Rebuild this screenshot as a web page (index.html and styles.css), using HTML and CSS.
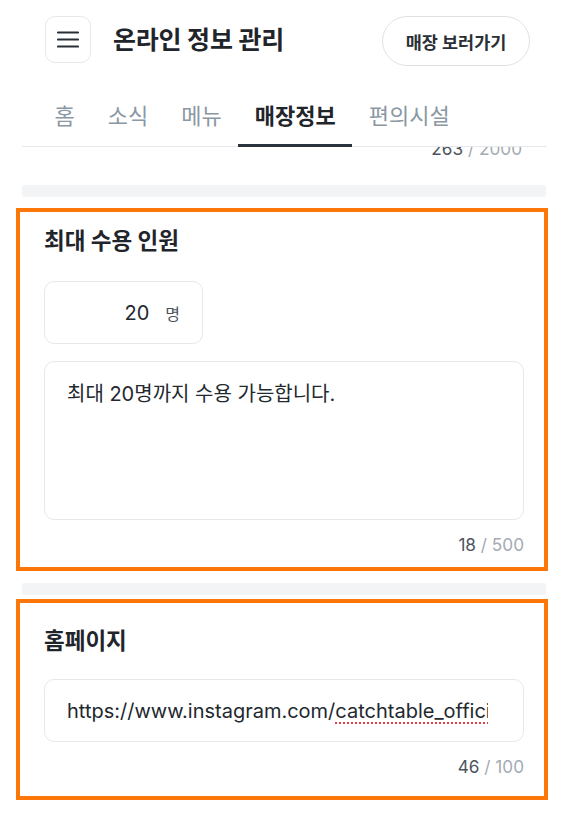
FILE: index.html
```html
<!DOCTYPE html>
<html lang="ko">
<head>
<meta charset="utf-8">
<title>온라인 정보 관리</title>
<link rel="stylesheet" href="styles.css">
</head>
<body>
<div class="app">
  <header class="topbar">
    <button class="menu-btn" aria-label="메뉴">
      <svg width="22" height="17" viewBox="0 0 22 17" aria-hidden="true">
        <path d="M1 1.5H21M1 8.5H21M1 15.5H21" stroke="#2b3036" stroke-width="2.2" stroke-linecap="round" fill="none"/>
      </svg>
    </button>
    <h1 class="title">온라인 정보 관리</h1>
    <button class="store-btn">매장 보러가기</button>
  </header>

  <nav class="tabs">
    <a class="tab">홈</a>
    <a class="tab">소식</a>
    <a class="tab">메뉴</a>
    <a class="tab tab--active">매장정보</a>
    <a class="tab">편의시설</a>
  </nav>

  <main class="content">
    <div class="scroll-inner">
      <p class="counter counter--cut"><span class="count">263</span> / 2000</p>
      <div class="divider"></div>

      <section class="field field--capacity">
        <h2 class="field-title">최대 수용 인원</h2>
        <div class="number-input">
          <span class="number-value">20</span>
          <span class="number-unit">명</span>
        </div>
        <div class="textarea">최대 20명까지 수용 가능합니다.</div>
        <p class="counter"><span class="count">18</span> / 500</p>
      </section>

      <div class="divider"></div>

      <section class="field field--homepage">
        <h2 class="field-title">홈페이지</h2>
        <div class="text-input">
          <span class="text-input-value">https://www.instagram.com/<span class="misspelled">catchtable_official</span></span>
        </div>
        <p class="counter"><span class="count">46</span> / 100</p>
      </section>
    </div>
  </main>
</div>
</body>
</html>
```

FILE: styles.css
```css
* {
  box-sizing: border-box;
}

html, body {
  margin: 0;
  padding: 0;
  background: #ffffff;
}

body {
  font-family: Inter, "Noto Sans CJK KR", "Noto Sans", sans-serif;
  color: #1f252b;
}

.app {
  width: 565px;
  height: 819px;
  display: flex;
  flex-direction: column;
  overflow: hidden;
}

/* Top bar */
.topbar {
  height: 80px;
  flex: 0 0 80px;
  display: flex;
  align-items: center;
  padding: 0 35px 0 45px;
}

.menu-btn {
  width: 46px;
  height: 47px;
  border: 1px solid #e6e8ea;
  border-radius: 10px;
  background: #ffffff;
  display: flex;
  align-items: center;
  justify-content: center;
  padding: 0;
  margin-top: -1px;
}

.title {
  margin: 0 0 0 22px;
  font-size: 25px;
  font-weight: 700;
  letter-spacing: -0.2px;
  color: #1f252b;
  line-height: 32px;
}

.store-btn {
  margin-left: auto;
  width: 148px;
  height: 50px;
  border: 1px solid #dfe1e4;
  border-radius: 25px;
  background: #ffffff;
  font-family: Inter, "Noto Sans CJK KR", sans-serif;
  font-size: 17.5px;
  font-weight: 700;
  color: #2a3036;
  padding: 0;
  margin-top: 2px;
}

/* Tabs */
.tabs {
  flex: 0 0 67px;
  height: 67px;
  display: flex;
  margin: 0 18px 0 22px;
  padding-left: 16px;
  border-bottom: 1px solid #e6e8eb;
}

.tab {
  position: relative;
  display: flex;
  align-items: center;
  padding: 2px 16.5px 0;
  font-size: 22px;
  color: #8b97a2;
}

.tab--active {
  color: #1f252b;
  font-weight: 700;
}

.tab--active::after {
  content: "";
  position: absolute;
  left: 0;
  right: 0;
  bottom: -1px;
  height: 3px;
  background: #2b333c;
}

/* Content */
.content {
  flex: 1 1 auto;
  overflow: hidden;
}

.scroll-inner {
  margin-top: -9px;
}

.counter {
  margin: 0;
  font-size: 17.2px;
  line-height: 21px;
  text-align: right;
  color: #a3abb3;
}

.counter .count {
  color: #4b545d;
}

.counter--cut {
  padding-right: 43px;
}

.divider {
  height: 12px;
  margin: 26px 19px 0 22px;
  background: #f3f4f6;
  border-radius: 2px;
}

.field {
  position: relative;
  padding: 32px 41px 28px 44px;
}

.field::before {
  content: "";
  position: absolute;
  left: 16px;
  right: 17px;
  border: 4px solid #fd7608;
  pointer-events: none;
}

.field--capacity::before {
  top: 11px;
  bottom: 12px;
}

.field--homepage {
  padding-top: 34px;
}

.field--homepage::before {
  top: 4px;
  bottom: 5px;
}

.field + .divider {
  margin-top: 0;
}

.field-title {
  margin: 0;
  font-size: 22.5px;
  line-height: 24px;
  font-weight: 700;
  color: #1f252b;
}

.number-input {
  width: 159px;
  height: 63px;
  margin-top: 28px;
  border: 1px solid #e6e8ea;
  border-radius: 10px;
  display: flex;
  align-items: center;
  justify-content: flex-end;
  gap: 16px;
  padding-right: 22px;
}

.number-value {
  font-size: 20px;
  color: #22282e;
}

.number-unit {
  font-size: 16px;
  color: #4b545d;
}

.textarea {
  height: 159px;
  margin-top: 17px;
  border: 1px solid #e6e8ea;
  border-radius: 10px;
  padding: 19px 22px;
  font-size: 20px;
  line-height: 26px;
  color: #22282e;
}

.field--capacity .counter {
  margin-top: 14px;
}

.text-input {
  height: 63px;
  margin-top: 26px;
  border: 1px solid #e6e8ea;
  border-radius: 10px;
  padding: 0 35px 0 22px;
  display: flex;
  align-items: center;
  overflow: hidden;
}

.text-input-value {
  display: block;
  white-space: nowrap;
  overflow: hidden;
  font-size: 20px;
  line-height: 28px;
  color: #22282e;
}

.misspelled {
  text-decoration: underline dotted #e0424a;
  text-decoration-thickness: 1.5px;
  text-underline-offset: 5px;
}

.field--homepage .counter {
  margin-top: 14px;
}
```
